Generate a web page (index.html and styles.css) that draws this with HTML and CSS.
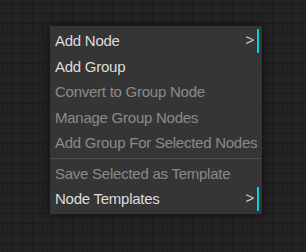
FILE: index.html
```html
<!DOCTYPE html>
<html lang="en">
<head>
    <meta charset="UTF-8">
    <meta name="viewport" content="width=device-width, initial-scale=1.0">
    <title>Canvas Menu</title>
    <link rel="stylesheet" href="styles.css">
</head>
<body>
    <div class="canvas">
        <div class="context-menu">
            <div class="menu-entry has-submenu">
                <span>Add Node</span>
                <span class="arrow">&gt;</span>
            </div>
            <div class="menu-entry">Add Group</div>
            <div class="menu-entry disabled">Convert to Group Node</div>
            <div class="menu-entry disabled">Manage Group Nodes</div>
            <div class="menu-entry disabled">Add Group For Selected Nodes</div>
            <div class="separator"></div>
            <div class="menu-entry disabled">Save Selected as Template</div>
            <div class="menu-entry has-submenu">
                <span>Node Templates</span>
                <span class="arrow">&gt;</span>
            </div>
        </div>
    </div>
</body>
</html>
```

FILE: styles.css
```css
body {
    margin: 0;
    font-family: 'Liberation Sans', Arial, sans-serif;
    background: #232323;
}

.canvas {
    width: 306px;
    height: 252px;
    box-sizing: border-box;
    padding: 26px 0 0 50px;
    background-color: #232323;
    background-image:
        linear-gradient(to right, #1c1c1c 1px, transparent 1px),
        linear-gradient(to bottom, #1c1c1c 1px, transparent 1px);
    background-size: 10px 10px;
    background-position: 2px 3px;
    overflow: hidden;
}

.context-menu {
    width: 212px;
    box-sizing: border-box;
    padding: 1px;
    background: #353535;
    box-shadow: 0 0 10px rgba(0, 0, 0, 0.6);
    display: flow-root;
}

.menu-entry {
    margin: 2px;
    padding: 2px;
    font-size: 15px;
    letter-spacing: -0.25px;
    line-height: 19.5px;
    color: #dddddd;
    white-space: nowrap;
}

.menu-entry.disabled {
    opacity: 0.5;
}

.menu-entry.has-submenu {
    display: flex;
    justify-content: space-between;
    padding-right: 3px;
    border-right: 2px solid #00d3de;
}

.arrow {
    line-height: 17px;
    color: #cfcfcf;
}

.separator {
    margin: 3px 0;
    border-top: 1px solid #505050;
}
```
